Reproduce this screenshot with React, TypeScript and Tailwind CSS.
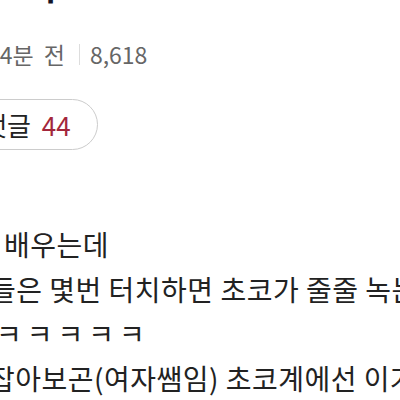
export default function App() {
  return (
    <div className="w-[400px] h-[400px] overflow-hidden bg-white font-['Noto_Sans_CJK_KR','Noto_Sans',sans-serif]">
      <div className="w-[900px] flex flex-col items-start">
        <h1 className="-ml-[45px] -mt-[36px] text-[34px] leading-[44px] font-bold text-[#141428] whitespace-nowrap">
          초코 리
        </h1>
        <div className="mt-[32px] -ml-[13px] flex items-center text-[23px] leading-[28px] text-[#666666] whitespace-nowrap">
          <span>44분</span>
          <span className="ml-[10px]">전</span>
          <span className="ml-[14px] w-px h-[21px] bg-[#dddddd]" />
          <span className="ml-[10px]">8,618</span>
        </div>
        <div className="mt-[31px] -ml-[42px] h-[51px] pl-[24px] pr-[26px] flex items-center border border-[#cccccc] rounded-full text-[26px] whitespace-nowrap">
          <span className="text-[#222222]">댓글</span>
          <span className="ml-[11px] text-[#a3263b]">44</span>
        </div>
        <div className="mt-[72px] w-[900px] text-[28px] tracking-[0.5px] leading-[44.5px] text-[#222222] whitespace-nowrap">
          <p className="pl-[4px]">배우는데</p>
          <p className="-ml-[10px]">들은 몇번 터치하면 초코가 줄줄 녹는다고</p>
          <p className="-ml-[4px] tracking-[5px]">ㅋㅋㅋㅋㅋ</p>
          <p className="-ml-[11px]">잡아보곤(여자쌤임) 초코계에선 이거 손 온도가</p>
        </div>
      </div>
    </div>
  );
}
